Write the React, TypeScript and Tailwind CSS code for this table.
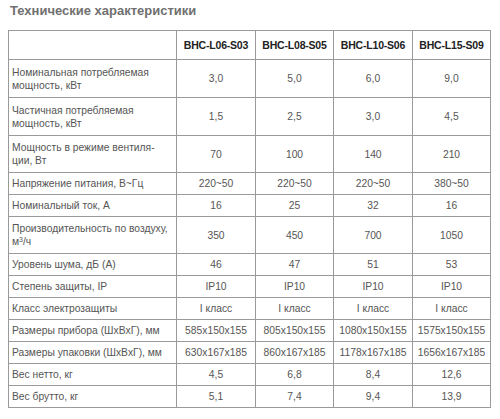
const models = ["BHC-L06-S03", "BHC-L08-S05", "BHC-L10-S06", "BHC-L15-S09"];

type Row = { label: React.ReactNode; values: string[]; h: string };

const rows: Row[] = [
  { label: "Номинальная потребляемая мощность, кВт", values: ["3,0", "5,0", "6,0", "9,0"], h: "h-[38px]" },
  { label: "Частичная потребляемая мощность, кВт", values: ["1,5", "2,5", "3,0", "4,5"], h: "h-[38px]" },
  { label: "Мощность в режиме вентиля-ции, Вт", values: ["70", "100", "140", "210"], h: "h-[37px]" },
  { label: "Напряжение питания, В~Гц", values: ["220~50", "220~50", "220~50", "380~50"], h: "h-[22px]" },
  { label: "Номинальный ток, А", values: ["16", "25", "32", "16"], h: "h-[22px]" },
  {
    label: (
      <>
        Производительность по воздуху, м<span className="text-[7px] align-[3px] leading-none">3</span>/ч
      </>
    ),
    values: ["350", "450", "700", "1050"],
    h: "h-[37px]",
  },
  { label: "Уровень шума, дБ (А)", values: ["46", "47", "51", "53"], h: "h-[22px]" },
  { label: "Степень защиты, IP", values: ["IP10", "IP10", "IP10", "IP10"], h: "h-[22px]" },
  { label: "Класс электрозащиты", values: ["I класс", "I класс", "I класс", "I класс"], h: "h-[22px]" },
  { label: "Размеры прибора (ШxВxГ), мм", values: ["585x150x155", "805x150x155", "1080x150x155", "1575x150x155"], h: "h-[22px]" },
  { label: "Размеры упаковки (ШxВxГ), мм", values: ["630x167x185", "860x167x185", "1178x167x185", "1656x167x185"], h: "h-[22px]" },
  { label: "Вес нетто, кг", values: ["4,5", "6,8", "8,4", "12,6"], h: "h-[22px]" },
  { label: "Вес брутто, кг", values: ["5,1", "7,4", "9,4", "13,9"], h: "h-[22px]" },
];

export default function App() {
  return (
    <div className="w-[500px] h-[419px] bg-white font-['Liberation_Sans',Arial,sans-serif] text-[#555]">
      {/* Title */}
      <div className="h-[30px] pl-[10px] pt-[2px]">
        <h2 className="text-[13px] font-bold text-[#707070] leading-[17px]">Технические характеристики</h2>
      </div>

      <table className="ml-[8px] w-[482px] border-collapse table-fixed text-[10.3px] leading-[13px]">
        <colgroup>
          <col className="w-[168px]" />
          <col className="w-[79px]" />
          <col className="w-[78px]" />
          <col className="w-[79px]" />
          <col className="w-[78px]" />
        </colgroup>
        <thead>
          <tr>
            <th className="h-[29px] border border-[#9a9a9a]" />
            {models.map((m) => (
              <th key={m} className="h-[29px] border border-[#9a9a9a] text-center font-bold text-[#222] whitespace-nowrap text-[10.5px] tracking-[-0.2px]">
                {m}
              </th>
            ))}
          </tr>
        </thead>
        <tbody>
          {rows.map((r, i) => (
            <tr key={i}>
              <td className={`${r.h} border border-[#9a9a9a] pl-[3px] pr-[2px] align-middle`}>{r.label}</td>
              {r.values.map((v, j) => (
                <td key={j} className={`${r.h} border border-[#9a9a9a] text-center align-middle whitespace-nowrap`}>
                  {v}
                </td>
              ))}
            </tr>
          ))}
        </tbody>
      </table>
    </div>
  );
}
